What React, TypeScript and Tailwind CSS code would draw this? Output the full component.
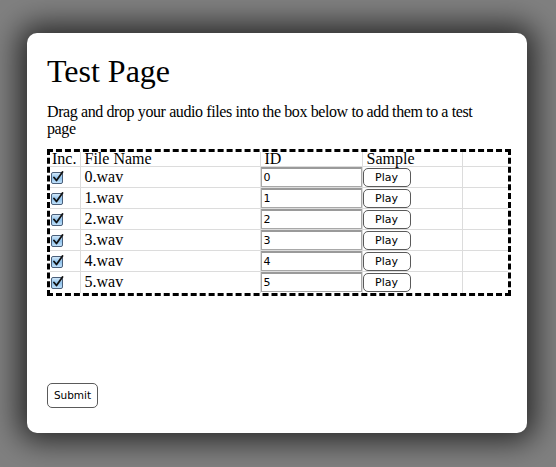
import React from "react";

function Check() {
  return (
    <svg width="13" height="13" viewBox="0 0 13 13" className="block">
      <defs>
        <linearGradient id="cbg" x1="0" y1="0" x2="0" y2="1">
          <stop offset="0" stopColor="#d8ecfb" />
          <stop offset="0.5" stopColor="#8fc2ec" />
          <stop offset="1" stopColor="#c4e3fb" />
        </linearGradient>
      </defs>
      <rect x="0.5" y="1.5" width="11" height="11" rx="1.5" fill="url(#cbg)" stroke="#4a5f7a" strokeWidth="1" />
      <path d="M3 6.5 L5.5 9.5 L11.5 1" fill="none" stroke="#111" strokeWidth="1.8" strokeLinecap="round" strokeLinejoin="round" />
    </svg>
  );
}

export default function App() {
  const rows = [0, 1, 2, 3, 4, 5];
  const serif = { fontFamily: '"Liberation Serif", "Times New Roman", serif' };
  return (
    <div className="w-[556px] h-[467px] bg-[#808080] pt-[33px] pl-[27px] overflow-hidden">
      <div
        className="w-[500px] h-[400px] bg-white rounded-[10px] shadow-[0_0_30px_8px_rgba(0,0,0,0.7)] px-[20px] pt-[20px] text-black"
        style={serif}
      >
        <h1 className="text-[32px] leading-[37px] m-0 font-normal">Test Page</h1>
        <p className="text-[16px] leading-[17px] mt-[13px] w-[440px] tracking-[-0.4px]">
          Drag and drop your audio files into the box below to add them to a test page
        </p>
        <div className="mt-[12px] w-[464px] border-[3px] border-dashed border-black">
          <table className="border-collapse table-fixed w-[458px] text-[16px]">
            <colgroup>
              <col className="w-[30px]" />
              <col className="w-[180px]" />
              <col className="w-[102px]" />
              <col className="w-[100px]" />
              <col className="w-[46px]" />
            </colgroup>
            <thead>
              <tr className="h-[14px]">
                <th className="p-0 pl-[2px] text-left font-normal leading-[14px] h-[14px] align-bottom">Inc.</th>
                <th className="p-0 pl-[4px] text-left font-normal leading-[14px] border-l border-[#dcdcdc] align-bottom">File Name</th>
                <th className="p-0 pl-[4px] text-left font-normal leading-[14px] border-l border-[#dcdcdc] align-bottom">ID</th>
                <th className="p-0 pl-[4px] text-left font-normal leading-[14px] border-l border-[#dcdcdc] align-bottom">Sample</th>
                <th className="p-0 border-l border-[#dcdcdc]"></th>
              </tr>
            </thead>
            <tbody>
              {rows.map((r) => (
                <tr key={r} className="h-[21px]">
                  <td className="p-0 pl-[1px] border-t border-[#dcdcdc] align-middle">
                    <Check />
                  </td>
                  <td className="p-0 pl-[4px] border-t border-l border-[#dcdcdc] align-middle leading-[20px]">
                    {r}.wav
                  </td>
                  <td className="p-0 border-t border-l border-[#dcdcdc] align-middle">
                    <div
                      className="w-[101px] h-[20px] border border-[#a8a8a8] border-t-2 border-t-[#9a9a9a] text-[11px] leading-[17px] pl-[2px] bg-white"
                      style={{ fontFamily: '"DejaVu Sans", sans-serif' }}
                    >
                      {r}
                    </div>
                  </td>
                  <td className="p-0 border-t border-l border-[#dcdcdc] align-middle">
                    <div
                      className="w-[48px] h-[19px] rounded-[5px] border border-[#5a5a5a] bg-white text-[11px] leading-[17px] text-center"
                      style={{ fontFamily: '"DejaVu Sans", sans-serif' }}
                    >
                      Play
                    </div>
                  </td>
                  <td className="p-0 border-t border-l border-[#dcdcdc]"></td>
                </tr>
              ))}
            </tbody>
          </table>
        </div>
        <div
          className="mt-[87px] w-[51px] h-[25px] rounded-[5px] border border-[#5a5a5a] bg-white text-[10.5px] leading-[23px] text-center"
          style={{ fontFamily: '"DejaVu Sans", sans-serif' }}
        >
          Submit
        </div>
      </div>
    </div>
  );
}
